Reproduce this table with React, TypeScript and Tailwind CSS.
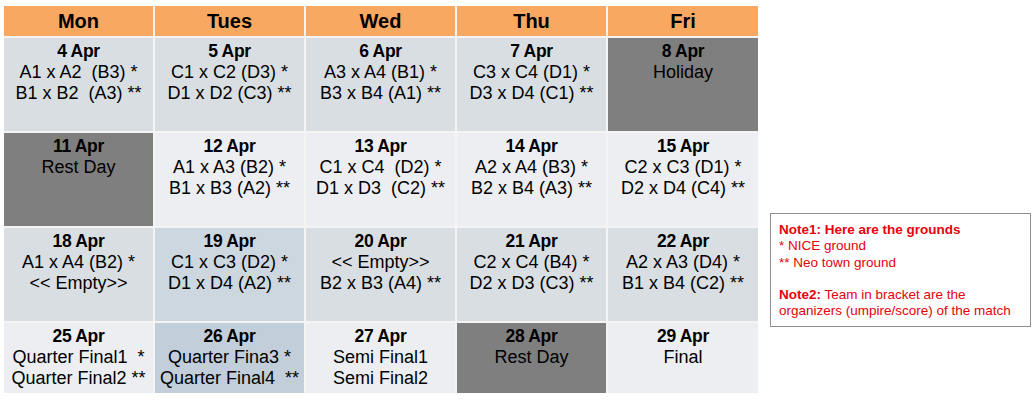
const days = ["Mon", "Tues", "Wed", "Thu", "Fri"];

type Cell = { date: string; lines: string[]; bg: string };

const rows: { h: string; cells: Cell[] }[] = [
  {
    h: "h-[93px]",
    cells: [
      { date: "4 Apr", lines: ["A1 x A2  (B3) *", "B1 x B2  (A3) **"], bg: "bg-[#d9dee3]" },
      { date: "5 Apr", lines: ["C1 x C2 (D3) *", "D1 x D2 (C3) **"], bg: "bg-[#d9dee3]" },
      { date: "6 Apr", lines: ["A3 x A4 (B1) *", "B3 x B4 (A1) **"], bg: "bg-[#d9dee3]" },
      { date: "7 Apr", lines: ["C3 x C4 (D1) *", "D3 x D4 (C1) **"], bg: "bg-[#d9dee3]" },
      { date: "8 Apr", lines: ["Holiday"], bg: "bg-[#7f7f7f]" },
    ],
  },
  {
    h: "h-[93px]",
    cells: [
      { date: "11 Apr", lines: ["Rest Day"], bg: "bg-[#7f7f7f]" },
      { date: "12 Apr", lines: ["A1 x A3 (B2) *", "B1 x B3 (A2) **"], bg: "bg-[#eceef1]" },
      { date: "13 Apr", lines: ["C1 x C4  (D2) *", "D1 x D3  (C2) **"], bg: "bg-[#eceef1]" },
      { date: "14 Apr", lines: ["A2 x A4 (B3) *", "B2 x B4 (A3) **"], bg: "bg-[#eceef1]" },
      { date: "15 Apr", lines: ["C2 x C3 (D1) *", "D2 x D4 (C4) **"], bg: "bg-[#eceef1]" },
    ],
  },
  {
    h: "h-[93px]",
    cells: [
      { date: "18 Apr", lines: ["A1 x A4 (B2) *", "<< Empty>>"], bg: "bg-[#d9dee3]" },
      { date: "19 Apr", lines: ["C1 x C3 (D2) *", "D1 x D4 (A2) **"], bg: "bg-[#cdd7e0]" },
      { date: "20 Apr", lines: ["<< Empty>>", "B2 x B3 (A4) **"], bg: "bg-[#d9dee3]" },
      { date: "21 Apr", lines: ["C2 x C4 (B4) *", "D2 x D3 (C3) **"], bg: "bg-[#d9dee3]" },
      { date: "22 Apr", lines: ["A2 x A3 (D4) *", "B1 x B4 (C2) **"], bg: "bg-[#d9dee3]" },
    ],
  },
  {
    h: "h-[70px]",
    cells: [
      { date: "25 Apr", lines: ["Quarter Final1  *", "Quarter Final2 **"], bg: "bg-[#eceef1]" },
      { date: "26 Apr", lines: ["Quarter Fina3 *", "Quarter Final4  **"], bg: "bg-[#c2ced9]" },
      { date: "27 Apr", lines: ["Semi Final1", "Semi Final2"], bg: "bg-[#eceef1]" },
      { date: "28 Apr", lines: ["Rest Day"], bg: "bg-[#7f7f7f]" },
      { date: "29 Apr", lines: ["Final"], bg: "bg-[#eceef1]" },
    ],
  },
];

export default function App() {
  return (
    <div className="flex items-start bg-white w-[1034px] h-[402px] pt-[6px] pl-[4px] font-['Liberation_Sans',Arial,sans-serif] text-black">
      <div className="grid grid-cols-[149px_149px_149px_149px_150px] gap-[2px] bg-[#f4f4f4]">
        {days.map((d) => (
          <div key={d} className="h-[30px] bg-[#f9a862] flex items-center justify-center text-[20px] font-bold">
            {d}
          </div>
        ))}
        {rows.map((r) =>
          r.cells.map((c) => (
            <div key={c.date} className={`${r.h} ${c.bg} pt-[3px] text-center text-[18px] leading-[21px] whitespace-pre`}>
              <div className="font-bold text-[17.5px] tracking-[-0.3px]">{c.date}</div>
              {c.lines.map((l) => (
                <div key={l}>{l}</div>
              ))}
            </div>
          ))
        )}
      </div>
      <div className="ml-[12px] mt-[207px] w-[261px] h-[114px] border border-[#8f8f8f] pl-[8px] pt-[8px] text-[13.5px] leading-[16.3px] text-[#e8000b]">
        <div className="font-bold">Note1: Here are the grounds</div>
        <div>* NICE ground</div>
        <div>** Neo town ground</div>
        <div className="h-[16.3px]" />
        <div>
          <span className="font-bold">Note2:</span> Team in bracket are the
        </div>
        <div>organizers (umpire/score) of the match</div>
      </div>
    </div>
  );
}
